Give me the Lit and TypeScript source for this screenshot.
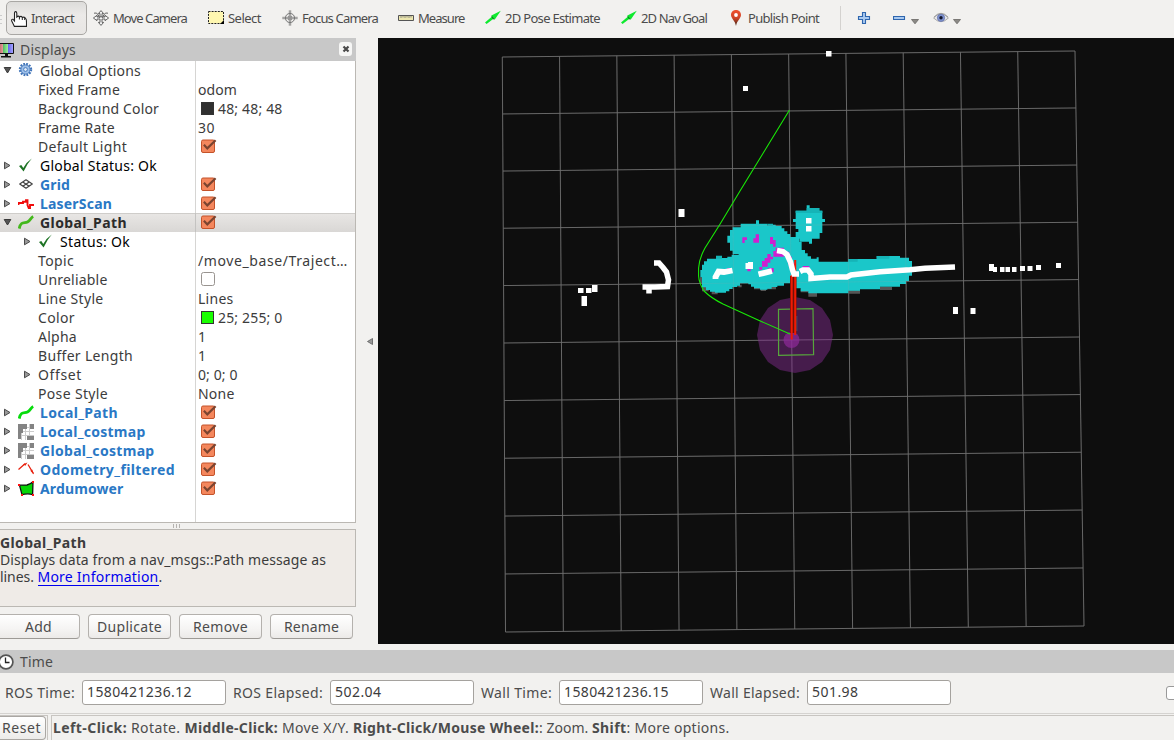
import { LitElement, html, svg, css, nothing } from "lit";
import { customElement, property } from "lit/decorators.js";

/** Single-line label whose tracking is adjusted so it fills a given width. */
@customElement("fit-text")
class FitText extends LitElement {
  @property({ type: Number }) width = 0;
  @property() text = "";
  static styles = css`
    :host { display: inline-block; white-space: pre; }
    span { display: inline-block; }
  `;
  render() {
    return html`<span>${this.text}</span>`;
  }
  updated() {
    const el = this.renderRoot.querySelector("span") as HTMLElement;
    el.style.letterSpacing = "0px";
    const natural = el.getBoundingClientRect().width;
    if (this.width) el.style.letterSpacing = (this.width - natural) / this.text.length + "px";
  }
}

const t = (text: string, width: number) => html`<fit-text .text=${text} .width=${width}></fit-text>`;
const ic = (body: unknown, w = 16, h = 16) =>
  html`<svg class="ic" width=${w} height=${h} viewBox="0 0 ${w} ${h}">${body}</svg>`;

const icons: Record<string, unknown> = {
  hand: svg`<path d="M3.5 6.5V2.2Q3.5 .6 4.6 .6T5.8 2.2V6Q7.7 4.2 8.4 6 10.4 4.6 11.2 6.4 13.6 5.4 14.6 7.4 15.5 8 15.5 11.5V15.4H3.4Q2 12.5.7 10 .3 8 2 8.2L3.5 10Z" fill="#fff" stroke="#222" stroke-width="1.1"/><path d="M8.4 6v2.5M11.3 6.4V9M13.7 7v2" stroke="#222" fill="none"/>`,
  move: svg`<g fill="#f4f4f4" stroke="#555" stroke-width=".9"><path d="M8 .6 10.6 3.6H9V7h3V5.3L15.6 8 12 10.7V9H9v3.4h1.6L8 15.4 5.4 12.4H7V9H4v1.7L.4 8 4 5.3V7h3V3.6H5.4Z"/><path d="M1 3.2 3.5 3 6 6 4.4 6.4M15 3.2 12.5 3 10 6l1.6.4M6 7.5Q8 5.8 10 7.5" fill="none"/></g>`,
  select: svg`<path d="M.5 1.5h15v12H.5z" fill="#fff7b0" stroke="#222" stroke-dasharray="2 1.1"/><path d="M16 10v4H12Z"/>`,
  focus: svg`<g fill="none" stroke="#777"><circle cx="8" cy="8" r="4.6"/><circle cx="8" cy="8" r="2.2"/><path d="M7.3.3v5M8.7.3v5M7.3 10.7v5M8.7 10.7v5M.3 7.3h5M.3 8.7h5M10.7 7.3h5M10.7 8.7h5" stroke-width=".8"/><path d="M8 6v4M6 8h4"/></g>`,
  measure: svg`<path d="M.5 5.5h15v5H.5z" fill="#ece6ae" stroke="#555"/><path d="M3 6v2M5 6v1.5M7 6v2M9 6v1.5M11 6v2M13 6v1.5" stroke="#777" stroke-width=".8"/>`,
  arrow: svg`<path d="M0 12.6 7 6.6 6.4 5.4 15.8.8 9.8 9.4 8.8 8.4 1.6 14Z" fill="#0eea2e"/><path d="M6.4 5.4 9.8 9.4 8 9.2 6.6 7Z" fill="#0b7a1d"/>`,
  pin: svg`<defs><linearGradient id="pg" x2="0" y2="1"><stop offset="0" stop-color="#f0502e"/><stop offset=".5" stop-color="#cf4428"/><stop offset="1" stop-color="#3d2414"/></linearGradient></defs><path d="M8 0C4.8 0 3 2.3 3 5.1 3 8.4 7 10.5 8 16 9 10.5 13 8.4 13 5.1 13 2.3 11.2 0 8 0Z" fill="url(#pg)"/><circle cx="8" cy="5" r="1.9" fill="#fff"/>`,
  plus: svg`<path d="M6.5 2.5h3v4h4v3h-4v4h-3v-4h-4v-3h4z" fill="#a9c9ef" stroke="#2f66ae" stroke-width="1.1"/>`,
  minus: svg`<path d="M.5 6.5h11v3h-11z" fill="#a9c9ef" stroke="#2f66ae" stroke-width="1.1"/>`,
  eye: svg`<path d="M.6 8Q8-.6 15.4 8 8 15.4.6 8Z" fill="#e9e9e9" stroke="#aaa"/><circle cx="8" cy="7.8" r="3.7" fill="#7f92cf" stroke="#5a69a5" stroke-width=".6"/><circle cx="8" cy="7.8" r="1.7" fill="#15182e"/><path d="M1 7Q8-.4 15 7" fill="none" stroke="#999" stroke-width=".9"/>`,
  gear: svg`<circle cx="7.5" cy="6.5" r="5.6" fill="none" stroke="#3f73b8" stroke-width="2.2" stroke-dasharray="1.76 1.17"/><circle cx="7.5" cy="6.5" r="4.6" fill="#9dbfe8" stroke="#4a7dc0"/><circle cx="7.5" cy="6.5" r="1.9" fill="#e4eefa" stroke="#4a7dc0"/>`,
  check: svg`<path d="M1 8 3.3 7 5.3 10Q8.6 4 13.8 .6 9 6 5.6 13.4Z" fill="#1d7324"/>`,
  grid: svg`<path d="M8 2.8 14.3 7 8 11.2 1.7 7ZM4.8 5l6.4 4.2M11.2 5 4.8 9.2" fill="none" stroke="#444" stroke-width="1.2" stroke-linejoin="round"/>`,
  laser: svg`<path d="M.5 9V7H5V5.7H8V4.2H9.5V9L10.7 12H12V9H16" fill="none" stroke="#f00c0c" stroke-width="1.9"/>`,
  gpath: svg`<path d="M1.2 13.6C3 5.5 6.5 8.6 9.5 7S12.5 3 15.2 1.6" fill="none" stroke="#43b81c" stroke-width="2.8"/>`,
  lpath: svg`<path d="M1.2 13.6C3 5.5 6.5 8.6 9.5 7S12.5 3 15.2 1.6" fill="none" stroke="#06dc0c" stroke-width="2.8"/>`,
  map: svg`<path d="M0 0h16v16H0z" fill="#fff"/><path d="M0 3.5h16M0 7.5h16M0 11.5h16M3.5 0v16M7.5 0v16M11.5 0v16" stroke="#ccc"/><path d="M0 0h9v5H5v4H3v6H0zM12 0h4v5h-4zM9 12h7v4H9z" fill="#838383"/>`,
  odom: svg`<path d="M.5 7.5 7 1.8M10 2.5 15.5 11.6" fill="none" stroke="#e8200e" stroke-width="1.3"/><path d="M5 2.2 9.4.6 7.4 3.8ZM12.3 8.8 14.2 7.4 16 12.5Z" fill="#e8200e"/>`,
  poly: svg`<path d="M1.5 4.2 9 4Q13 3 15 .8L14.6 13.6Q10 12 4 13.6Z" fill="#06d506" stroke="#111" stroke-width="1.3"/><path d="M0 3h2v2H0zM14 0h2v2h-2zM14 13h2v2h-2zM3 13h2v2H3z" fill="#f11"/>`,
};

const checkbox = (on: boolean) => on
  ? ic(svg`<rect x="1.5" y="2" width="13" height="12.5" rx="1.5" fill="#f4875d" stroke="#c4532a"/><path d="M3.9 6.8 7.3 10.4 15.6 2.2" fill="none" stroke="#7a4430" stroke-width="2.2"/>`, 17, 17)
  : ic(svg`<rect x="1.5" y="1.5" width="13" height="13" rx="2" fill="#fff" stroke="#999490"/>`, 17, 17);

type Row = { l: string; w: number; lv?: number; a?: "r" | "d"; i?: string; k?: string; v?: string; vw?: number; c?: boolean; sw?: string };
const rows: Row[] = [
  { l: "Global Options", w: 101, a: "d", i: "gear" },
  { l: "Fixed Frame", w: 82, lv: 1, v: "odom", vw: 39 },
  { l: "Background Color", w: 121, lv: 1, v: "48; 48; 48", vw: 64.5, sw: "dark" },
  { l: "Frame Rate", w: 77, lv: 1, v: "30", vw: 17 },
  { l: "Default Light", w: 89, lv: 1, c: true },
  { l: "Global Status: Ok", w: 117, a: "r", i: "check", k: "black" },
  { l: "Grid", w: 30, a: "r", i: "grid", k: "blue", c: true },
  { l: "LaserScan", w: 72, a: "r", i: "laser", k: "blue", c: true },
  { l: "Global_Path", w: 87, a: "d", i: "gpath", k: "bold", c: true },
  { l: "Status: Ok", w: 70, lv: 1, a: "r", i: "check", k: "black" },
  { l: "Topic", w: 36, lv: 1, v: "/move_base/Traject…", vw: 150 },
  { l: "Unreliable", w: 69.5, lv: 1, c: false },
  { l: "Line Style", w: 65.5, lv: 1, v: "Lines", vw: 35.5 },
  { l: "Color", w: 37, lv: 1, v: "25; 255; 0", vw: 64.5, sw: "green" },
  { l: "Alpha", w: 39, lv: 1, v: "1", vw: 8 },
  { l: "Buffer Length", w: 95, lv: 1, v: "1", vw: 8 },
  { l: "Offset", w: 44, lv: 1, a: "r", v: "0; 0; 0", vw: 39.5 },
  { l: "Pose Style", w: 70, lv: 1, v: "None", vw: 36.5 },
  { l: "Local_Path", w: 78, a: "r", i: "lpath", k: "blue", c: true },
  { l: "Local_costmap", w: 105.5, a: "r", i: "map", k: "blue", c: true },
  { l: "Global_costmap", w: 114.5, a: "r", i: "map", k: "blue", c: true },
  { l: "Odometry_filtered", w: 135, a: "r", i: "odom", k: "blue", c: true },
  { l: "Ardumower", w: 83.5, a: "r", i: "poly", k: "blue", c: true },
];

/* The ground grid is seen slightly from the side, so both families of lines tilt. */
const bow = (s: number) => -6 * s * (1 - s);
const gridPath = Array.from({ length: 11 }, (_, k) => {
  const s = k / 10;
  return `M${502.3 + 572.7 * s} ${57 - 6 * s}L${505.5 + 578.5 * s} ${632 - 6 * s}` +
    `M${502.3 + 3.2 * s} ${57 + 575 * s + bow(s)}L${1075 + 9 * s} ${51 + 575 * s + bow(s)}`;
}).join("");

const dots: number[][] = [
  [826, 51, 5.5, 5.5], [743, 86, 5, 5], [678.5, 209, 6, 8], [578, 288, 5.5, 5], [586, 288, 5.5, 5], [592, 285, 5.5, 7],
  [581.5, 296, 5.5, 10], [953, 307, 5, 7], [970.5, 308, 5, 6], [989, 264, 5, 7], [993, 267, 4, 5], [1000, 267, 4.5, 5],
  [1005.5, 267, 4.5, 5], [1012, 267, 4.5, 5], [1020, 266, 5, 5], [1027.5, 266, 5, 5], [1036, 265, 5, 5], [1056, 263, 5, 5],
  [806, 218, 5.5, 5.5], [806, 226, 5.5, 5.5], [745.5, 263, 7, 6], [748, 262, 5, 7],
];

const costmap = "M128 112H152V101H198V91H207V101H232V108H249V104H257V108H275V115H283V124H292V132H301V141H327V155H335V180H345V190H353V199H363V206H380V202H386V215H475V207H560V198H630V203H657V213H666V257H657V273H648V282H630V290H570V298H510V302H475V310H355V304H332V295H316V289H300V280H282V287H262V291H245V296H232V299H210V295H192V290H183V283H175V280H150V287H142V291H128V297H118V304H108V308H75V305H60V300H48V292H36V262H31V240H36V224H42V214H51V206H78V197H96V204H112V200H125V194H146V192H128V182H120V158H112V137H120V120H128Z";
const ball = "M317 62H350V46H359V54H388V62H397V87H405V96H397V129H389V146H366V161H357V155H328V146H317V126H325V117H317V96H309V87H317Z";

const scene = svg`
  <path d=${gridPath} fill="none" stroke="#5d5d5d"/>
  <g transform="translate(690 190) scale(.33333)">
    <path d="M30 262h10v18h-10zM36 288h20v16h-20zM65 300h18v13h-18zM145 284h10v8h-10zM192 290h66v8h-66zM212 296h16v7h-16zM332 297h24v10h-24zM355 305h26v15h-26zM475 300h35v11h-35zM570 290h36v10h-36z" fill="#555"/>
    <path d=${costmap} fill="#1bcbcd" fill-opacity=".98"/>
    <path d=${ball} fill="#1bcbcd" fill-opacity=".98"/>
    <path d="M317 62h33v-8h38v8h9v7h-80zM232 101h17v7h-17zM475 207h28v8h-28zM560 198h38v8h-38zM78 198h18v8h-18z" fill="#15b4b7"/>
    <path d="M157 142h14v8h-7v9h-7zM190 145h7v-12h10v25h-17zM240 141h9v9h8v23h25v27h-33v8h-8v10h-8v12h-16v9h-9v-8h8v-18h8v-9h8v-12h10v8h8v-17h7v-13h-8v-8h-9zM283 185h15v15h8v18h8v26h-12zM172 236h10v8h-10zM235 234h16v13h-16zM80 239h12v8h-12zM112 234h12v8h-12zM338 228h20v8h-20z" fill="#cf1fd0"/>
  </g>
  <path d=${gridPath} fill="none" stroke="#999" stroke-opacity=".17"/>
  <path d="M833 335l-3 15-8 12-12 8-15 3-15-3-12-8-8-12-3-15 3-15 8-12 12-8 15-3 15 3 12 8 8 12z" fill="#842b91" fill-opacity=".48"/>
  <circle cx="791.5" cy="340" r="8" fill="#8e2a9a" fill-opacity=".7"/>
  <path d="M789.5 110 740 191 719.5 225 705 248Q699 259 698.6 268V276Q699 283 704 291 711 298 723 304L758 320 790 334" fill="none" stroke="#19e807" stroke-width="1.1"/>
  <path d="M778.5 309.3 813 308.6 813.6 354.6 778.6 355.4Z" fill="none" stroke="#57a63c" stroke-width="1.2"/>
  <path d="M796.7 316v15" stroke="#3a7896"/>
  <path d="M790 276h6.5v57H790z" fill="#701008"/>
  <path d="M791.7 275v64.5M795.2 260v75" stroke="#f01b04" stroke-width="2"/>
  <g fill="none" stroke="#fff" stroke-width="5.5">
    <path d="M777 250.5 783 251.5 787 254.5 790.5 262 792.5 270 794 274H799M800 271.5 803 270H808L811 274V278.5L830 277H847L851 275 880 271.8 910 269.7 925 268.3 955 267"/>
    <path d="M758.5 274.3 772 271M715.5 279V277L718.5 271.5 724 272 732.5 270.5" stroke-width="5.8"/>
    <path d="M654 263H659L663 267.5 666.5 272 668.5 280 667.5 286.5 655 287H642.5M649 286v7.5"/>
  </g>
  <g fill="#fff">${dots.map(([x, y, w, h]) => svg`<rect x=${x} y=${y} width=${w} height=${h}/>`)}</g>
`;

@customElement("app-root")
class AppRoot extends LitElement {
  static styles = css`
    :host { display: flex; flex-direction: column; width: 1174px; height: 740px; overflow: hidden; background: #f2f1ef; color: #4c4c4c; font: 14px/19px "Noto Sans", "Open Sans", sans-serif; box-sizing: border-box; }
    * { box-sizing: border-box; }
    svg { display: block; flex: none; }
    .tools { height: 38px; flex: none; display: grid; grid-template-columns: 6px 87px 115px 74px 116px 87px 136px 107px 112px 16px 37px 40px 50px; font-size: 13px; }
    .tool { display: flex; align-items: center; gap: 4px; height: 36px; }
    .grip { margin-top: 15px; height: 9px; width: 2px; background: repeating-linear-gradient(#ccc 0 1px, transparent 1px 4px); }
    .tool.on { width: 81px; height: 34px; margin-top: 1px; padding: 1px 0 0 4px; border: 1px solid #a9a7a4; border-radius: 5px; background: linear-gradient(#dddcda, #eceae8 40%, #e8e6e4); }
    .tool.mini { gap: 2px; }
    .tool.eye { gap: 4px; }
    .mini .tri { margin-top: 7px; }
    .sep { width: 1px; height: 24px; margin-top: 6px; background: #d4d2cf; }
    .main { flex: none; height: 606px; display: flex; }
    .left { width: 356px; display: flex; flex-direction: column; }
    .head { height: 23px; flex: none; background: #c8c8c8; display: flex; align-items: center; }
    .head .label { margin-left: 6px; flex: 1; }
    .close { width: 13px; height: 14px; margin: 0 4px 2px 0; border-radius: 3px; background: #f6f6f5; display: flex; align-items: center; justify-content: center; }
    .tree { height: 462px; flex: none; background: #fff linear-gradient(#d6d5d3, #d6d5d3) 195px 0 / 1px 100% no-repeat; border: solid #bbb8b3; border-width: 0 1px 1px 0; color: #3c3c3c; }
    .row { height: 19px; display: flex; align-items: center; }
    .row.sel { background: linear-gradient(90deg, transparent 195px, #c4c3c1 195px 196px, transparent 196px), linear-gradient(#cfcdca 1px, #e8e6e4 1px, #d9d7d5); }
    .name { width: 198px; display: flex; align-items: center; flex: none; }
    .indent { width: 20px; }
    .arr { width: 18px; padding-left: 3px; }
    .icon { width: 22px; }
    .black { color: #000; }
    .bold { color: #2b2b2b; font-weight: 700; }
    .blue { color: #2a78c5; font-weight: 700; }
    .val { display: flex; align-items: center; }
    .val .ic { margin-left: 2px; }
    .sw { width: 13px; height: 13px; margin: 0 4px 0 3px; border: 1px solid #333; background: #303030; }
    .sw.green { background: #19ff00; }
    .split { height: 6px; flex: none; display: flex; justify-content: center; align-items: center; gap: 2px; padding-right: 4px; }
    .split i { width: 1px; height: 4px; background: #b5b3b0; }
    .desc { height: 78px; flex: none; border: 1px solid #bbb8b3; border-left: 0; background: #efebe7; color: #3c3c3c; padding-top: 4px; line-height: 17px; display: flex; flex-direction: column; overflow: hidden; }
    .desc div { display: flex; height: 17px; }
    .link { color: #00e; border-bottom: 1px solid #00e; height: 18px; }
    .btns { display: flex; gap: 8px; padding-top: 7px; height: 37px; }
    .btn { width: 83px; height: 25px; border: 1px solid #b4b1ad; border-bottom-color: #9d9a96; border-radius: 4px; background: linear-gradient(#fff, #f5f4f3 60%, #eceae8); display: flex; justify-content: center; align-items: center; }
    .btn.add { width: 80px; border-left: 0; border-radius: 0 4px 4px 0; padding-right: 2px; }
    .mid { width: 22px; display: flex; align-items: center; justify-content: center; padding-left: 6px; }
    .time { margin-top: 6px; }
    .fields { height: 41px; display: flex; align-items: center; padding: 0 0 2px 5px; }
    .field { display: flex; align-items: center; justify-content: space-between; margin-right: 8px; }
    .input { width: 144px; height: 25px; border: 1px solid #a5a29e; border-radius: 3px; background: #fff; color: #3c3c3c; padding: 1px 0 0 4px; line-height: 19px; }
    .f1 { width: 221px; margin-right: 7px; } .f2 { width: 241px; margin-right: 7px; } .f3 { width: 222px; margin-right: 7px; } .f4 { width: 241px; }
    .chk { margin-left: auto; margin-right: -8px; width: 16px; height: 14px; border: 1px solid #999; border-radius: 3px; background: #fff; }
    .status { height: 28px; border-top: 1px solid #d5d3d0; display: flex; gap: 3px; margin-top: -1px; padding-top: 1px; }
    .reset { width: 48px; height: 26px; border: 1px solid #c8c5c1; border-left: 0; flex: none; }
    .reset div { width: 46px; height: 24px; border: 1px solid #aaa7a3; border-left: 0; border-radius: 0 4px 4px 0; background: linear-gradient(#fff, #ecebe9); padding: 1px 0 0 2px; }
    .hint { flex: 1; height: 26px; border: 1px solid #c8c5c1; border-right: 0; display: flex; align-items: center; padding: 0 0 1px 1px; }
    b { font-weight: 700; }
  `;

  tool(icon: string, text: string, w: number, cls = "") {
    return html`<div class="tool ${cls}">${ic(icons[icon])}${t(text, w)}</div>`;
  }
  tri() {
    return html`<div class="tri">${ic(svg`<path d="M.5 1.5h7L4 5.8Z" fill="#8b8985" stroke="#686663" stroke-width=".8"/>`, 8, 7)}</div>`;
  }
  row(r: Row) {
    return html`<div class="row ${r.k === "bold" ? "sel" : ""}">
      <div class="name">
        ${r.lv ? html`<div class="indent"></div>` : nothing}
        <div class="arr">${r.a === "r" ? ic(svg`<path d="M1.5 1.2 7 4.5 1.5 7.8Z" fill="#999" stroke="#4a4a4a"/>`, 9, 9) : r.a === "d" ? ic(svg`<path d="M1.2 1.5h6.6L4.5 7Z" fill="#555" stroke="#3a3a3a"/>`, 9, 9) : nothing}</div>
        ${r.i ? html`<div class="icon">${ic(icons[r.i])}</div>` : nothing}
        <div class=${r.k ?? ""}>${t(r.l, r.w)}</div>
      </div>
      <div class="val">
        ${r.sw ? html`<div class="sw ${r.sw}"></div>` : nothing}
        ${r.c !== undefined ? checkbox(r.c) : nothing}
        ${r.v ? t(r.v, r.vw ?? 0) : nothing}
      </div>
    </div>`;
  }
  render() {
    return html`
      <div class="tools">
        <div class="grip"></div>
        ${this.tool("hand", "Interact", 43, "on")}
        ${this.tool("move", "Move Camera", 74)}
        ${this.tool("select", "Select", 33)}
        ${this.tool("focus", "Focus Camera", 76)}
        ${this.tool("measure", "Measure", 46.5)}
        ${this.tool("arrow", "2D Pose Estimate", 95)}
        ${this.tool("arrow", "2D Nav Goal", 66)}
        ${this.tool("pin", "Publish Point", 71)}
        <div class="sep"></div>
        <div class="tool">${ic(icons.plus)}</div>
        <div class="tool mini">${ic(icons.minus)}${this.tri()}</div>
        <div class="tool mini eye">${ic(icons.eye)}${this.tri()}</div>
      </div>
      <div class="main">
        <div class="left">
          <div class="head">
            ${ic(svg`<defs><linearGradient id="mg"><stop offset="0" stop-color="#b55"/><stop offset=".3" stop-color="#d99"/><stop offset=".34" stop-color="#5b6"/><stop offset=".62" stop-color="#9e9"/><stop offset=".66" stop-color="#66e"/><stop offset="1" stop-color="#aaf"/></linearGradient></defs><path d="M-2 1.5h15.5v10H-2z" fill="url(#mg)" stroke="#111"/><path d="M5 12h3v2h3v1.5H1V14h4z" fill="#111"/>`, 14, 16)}
            <div class="label">${t("Displays", 56)}</div>
            <div class="close">${ic(svg`<path d="M1.5 1.5 6.5 6.5M6.5 1.5 1.5 6.5" stroke="#4a4a4a" stroke-width="2.2"/>`, 8, 8)}</div>
          </div>
          <div class="tree">${rows.map((r) => this.row(r))}</div>
          <div class="split"><i></i><i></i><i></i></div>
          <div class="desc">
            <div><b>${t("Global_Path", 86.5)}</b></div>
            <div>${t("Displays data from a nav_msgs::Path message as", 326)}</div>
            <div>${t("lines. ", 37.5)}<span class="link">${t("More Information", 121)}</span>${t(".", 4)}</div>
          </div>
          <div class="btns">
            <div class="btn add">${t("Add", 27)}</div>
            <div class="btn">${t("Duplicate", 65)}</div>
            <div class="btn">${t("Remove", 55)}</div>
            <div class="btn">${t("Rename", 55)}</div>
          </div>
        </div>
        <div class="mid">${ic(svg`<path d="M6.5 1.5v6L1.5 4.5Z" fill="#999" stroke="#5a5a5a" stroke-width=".8"/>`, 8, 9)}</div>
        <svg width="796" height="606" viewBox="378 38 796 606"><rect x="378" y="38" width="796" height="606" fill="#0e0e0e"/>${scene}</svg>
      </div>
      <div class="time">
        <div class="head">
          ${ic(svg`<circle cx="6" cy="8" r="6.9" fill="#fff" stroke="#555" stroke-width="1.7"/><path d="M5.5 3.5v5h4" fill="none" stroke="#222" stroke-width="1.3"/>`, 14, 16)}
          <div class="label">${t("Time", 33)}</div>
        </div>
        <div class="fields">
          <div class="field f1">${t("ROS Time:", 70)}<div class="input">${t("1580421236.12", 105)}</div></div>
          <div class="field f2">${t("ROS Elapsed:", 90)}<div class="input">${t("502.04", 46.5)}</div></div>
          <div class="field f3">${t("Wall Time:", 71)}<div class="input">${t("1580421236.15", 105)}</div></div>
          <div class="field f4">${t("Wall Elapsed:", 90)}<div class="input">${t("501.98", 46.5)}</div></div>
          <div class="chk"></div>
        </div>
        <div class="status">
          <div class="reset"><div>${t("Reset", 39)}</div></div>
          <div class="hint"><b>${t("Left-Click:", 74)}</b>${t(" Rotate. ", 57.5)}<b>${t("Middle-Click:", 93.5)}</b>${t(" Move X/Y. ", 75)}<b>${t("Right-Click/Mouse Wheel:", 186)}</b>${t(": Zoom. ", 53)}<b>${t("Shift", 34.5)}</b>${t(": More options.", 103)}</div>
        </div>
      </div>`;
  }
}
